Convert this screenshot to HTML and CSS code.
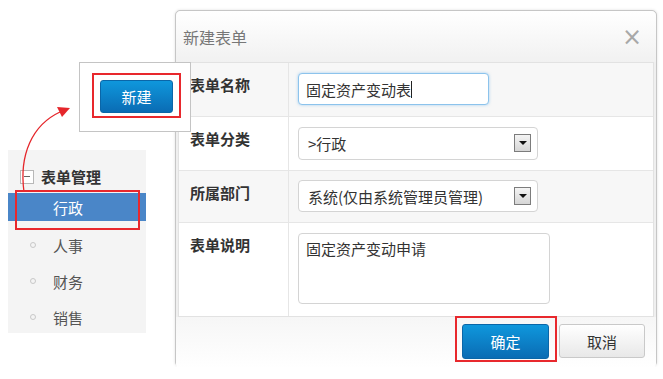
FILE: index.html
```html
<!DOCTYPE html>
<html lang="zh-CN">
<head>
  <meta charset="UTF-8" />
  <title>新建表单</title>
  <link rel="stylesheet" href="styles.css">
</head>
<body>
  <div class="page">
    <div class="side">
      <div class="popup">
        <button class="btn btn-blue btn-new">新建</button>
        <span class="mark mark-new"></span>
      </div>

      <div class="tree">
        <div class="tree-head"><span class="minus"></span>表单管理</div>
        <ul>
          <li class="active">行政</li>
          <li><i></i>人事</li>
          <li><i></i>财务</li>
          <li><i></i>销售</li>
        </ul>
        <span class="mark mark-tree"></span>
      </div>

      <svg class="arrow" width="80" height="100" viewBox="0 0 80 100">
        <path d="M24 92 C19 55 32 25 60 12" fill="none" stroke="#e5262b" stroke-width="1.3"/>
        <path d="M70 8 L57 7 L62 17 Z" fill="#e5262b"/>
      </svg>
    </div>

    <div class="dialog">
      <div class="dialog-head">
        <span>新建表单</span>
        <span class="close">&times;</span>
      </div>
      <div class="dialog-body">
        <div class="row gray r1">
          <div class="label">表单名称</div>
          <div class="field"><div class="input focus">固定资产变动表<span class="caret"></span></div></div>
        </div>
        <div class="row r2">
          <div class="label">表单分类</div>
          <div class="field"><div class="select">&gt;行政<span class="drop"></span></div></div>
        </div>
        <div class="row gray r3">
          <div class="label">所属部门</div>
          <div class="field"><div class="select">系统(仅由系统管理员管理)<span class="drop"></span></div></div>
        </div>
        <div class="row r4">
          <div class="label">表单说明</div>
          <div class="field"><div class="textarea">固定资产变动申请</div></div>
        </div>
      </div>
      <div class="dialog-foot">
        <button class="btn btn-blue btn-ok">确定</button>
        <button class="btn btn-gray">取消</button>
      </div>
      <span class="mark mark-ok"></span>
    </div>
  </div>
</body>
</html>
```

FILE: styles.css
```css
body {
  margin: 0;
  background: #fff;
  font-family: "Liberation Sans", "Noto Sans CJK SC", sans-serif;
  color: #333;
}
.page {
  display: flex;
  padding-top: 10px;
}
.side {
  position: relative;
  width: 175px;
  flex: none;
}
.popup {
  position: absolute;
  left: 79px;
  top: 52px;
  width: 110px;
  height: 68px;
  background: #fff;
  border: 1px solid #c4c4c4;
  z-index: 3;
}
.btn {
  font-family: "Noto Sans CJK SC", sans-serif;
  font-size: 15px;
  border-radius: 3px;
  cursor: pointer;
  outline: none;
}
.btn-blue {
  color: #fff;
  border: 1px solid #0a66a8;
  background: linear-gradient(#0f97dc, #0a6cb4);
}
.btn-gray {
  color: #333;
  border: 1px solid #c9c9c9;
  background: linear-gradient(#fff, #e8e8e8);
  width: 86px;
  height: 34px;
}
.btn-new {
  margin: 17px 0 0 20px;
  width: 73px;
  height: 33px;
}
.mark {
  position: absolute;
  box-sizing: border-box;
  border: 2px solid #e8282d;
  pointer-events: none;
  z-index: 5;
}
.mark-new {
  left: 12px;
  top: 10px;
  width: 89px;
  height: 45px;
}
.tree {
  position: relative;
  margin: 140px 0 0 8px;
  width: 138px;
  height: 183px;
  background: #f4f4f4;
  font-family: "Noto Sans CJK SC", sans-serif;
}
.tree-head {
  display: flex;
  align-items: center;
  padding: 16px 0 0 12px;
  font-size: 15px;
  font-weight: bold;
  color: #333;
  height: 21px;
}
.minus {
  width: 12px;
  height: 12px;
  border: 1px solid #b8b8b8;
  background: #fff;
  margin-right: 7px;
  position: relative;
}
.minus::after {
  content: "";
  position: absolute;
  left: 3px;
  top: 5px;
  width: 6px;
  height: 1px;
  background: #666;
}
.tree ul {
  list-style: none;
  margin: 6px 0 0;
  padding: 0;
}
.tree li {
  display: flex;
  align-items: center;
  height: 36px;
  padding-left: 45px;
  font-size: 15px;
  color: #555;
  position: relative;
}
.tree li.active {
  height: 28px;
  margin-bottom: 6px;
  background: #4a86c8;
  color: #fff;
}
.tree li i {
  position: absolute;
  left: 22px;
  top: 15px;
  width: 4px;
  height: 4px;
  border: 1px solid #c8c8c8;
  border-radius: 50%;
}
.mark-tree {
  left: 7px;
  top: 40px;
  width: 125px;
  height: 40px;
}
.arrow {
  position: absolute;
  left: 0;
  top: 90px;
  z-index: 4;
}
.dialog {
  position: relative;
  width: 480px;
  height: 355px;
  border: 1px solid #c6c6c6;
  border-radius: 5px;
  background: #efefef;
  box-shadow: 0 0 3px rgba(0,0,0,0.12);
  font-family: "Noto Sans CJK SC", sans-serif;
}
.dialog-head {
  height: 51px;
  display: flex;
  align-items: center;
  justify-content: space-between;
  padding: 0 14px 0 7px;
  font-size: 16px;
  color: #777;
  background: linear-gradient(#fff, #f1f1f1);
  border-radius: 5px 5px 0 0;
}
.close {
  font-family: "DejaVu Sans", sans-serif;
  font-size: 24px;
  color: #a8a8a8;
}
.dialog-body {
  margin: 0 2px;
  background: #fff;
  border: 1px solid #e2e2e2;
}
.row {
  display: flex;
  border-bottom: 1px solid #e6e6e6;
}
.row:last-child {
  border-bottom: none;
}
.row.gray {
  background: #f7f7f7;
}
.r1 { height: 53px; }
.r2 { height: 53px; }
.r3 { height: 51px; }
.r4 { height: 93px; }
.label {
  width: 98px;
  flex: none;
  padding: 11px 0 0 11px;
  font-size: 15px;
  font-weight: bold;
  color: #333;
  border-right: 1px solid #e6e6e6;
}
.field {
  padding: 10px 0 0 9px;
}
.input, .select, .textarea {
  box-sizing: border-box;
  background: #fff;
  border: 1px solid #d4d4d4;
  border-radius: 4px;
  font-size: 15px;
  color: #333;
  display: flex;
  align-items: center;
  padding-left: 7px;
}
.input {
  width: 191px;
  height: 32px;
}
.input.focus {
  border-color: #8cc3ec;
  box-shadow: 0 0 3px rgba(82,168,236,0.5);
}
.caret {
  width: 1px;
  height: 17px;
  background: #222;
}
.select {
  width: 240px;
  height: 33px;
  position: relative;
  padding-left: 9px;
}
.r3 .select {
  height: 32px;
  margin-top: -1px;
}
.drop {
  position: absolute;
  right: 6px;
  top: 6px;
  width: 17px;
  height: 18px;
  box-sizing: border-box;
  border: 1px solid #7c7c7c;
  background: linear-gradient(#f4f4f4, #d6d6d6);
}
.drop::after {
  content: "";
  position: absolute;
  left: 4px;
  top: 6px;
  border-left: 4px solid transparent;
  border-right: 4px solid transparent;
  border-top: 4px solid #111;
}
.textarea {
  width: 252px;
  height: 71px;
  align-items: flex-start;
  padding-top: 4px;
}
.dialog-foot {
  display: flex;
  justify-content: flex-end;
  gap: 10px;
  padding: 7px 11px 0 0;
  height: 45px;
  background: linear-gradient(#f6f6f6, #fff);
  border-radius: 0 0 5px 5px;
}
.btn-ok {
  width: 87px;
  height: 35px;
}
.mark-ok {
  left: 279px;
  top: 305px;
  width: 102px;
  height: 46px;
}
```
